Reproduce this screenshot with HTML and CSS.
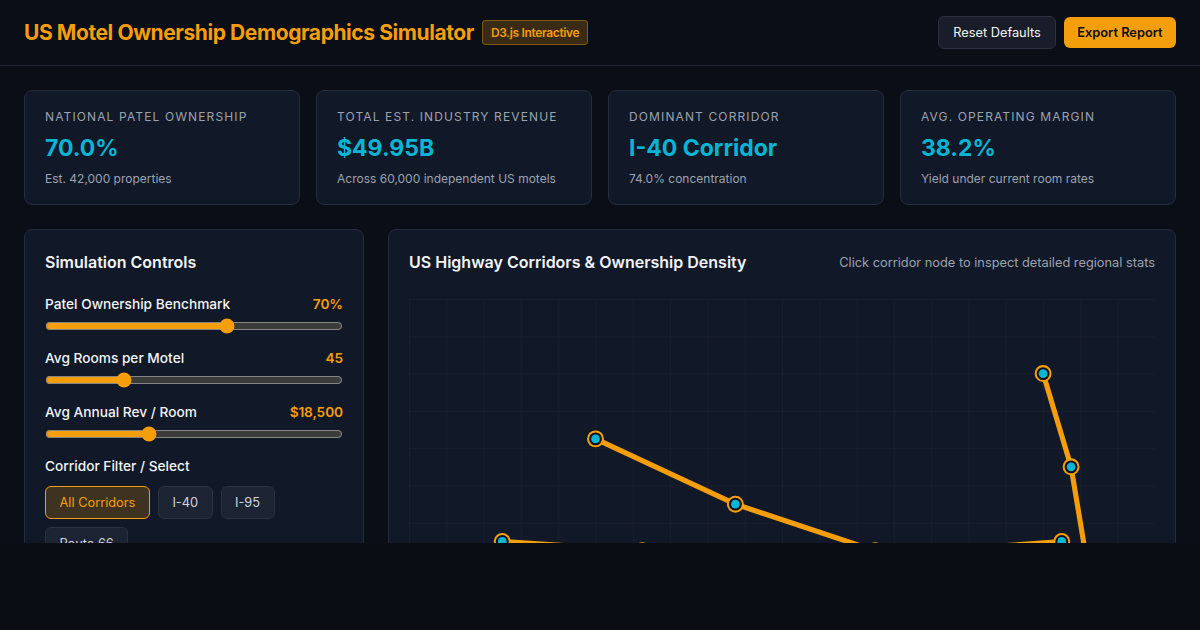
FILE: index.html
```html
<!DOCTYPE html>
<html lang="en">
<head>
  <meta charset="utf-8">
  <title>US Motel Ownership Demographics Simulator</title>
  <link rel="stylesheet" href="styles.css">
</head>
<body>
  <div class="app">
    <header class="topbar">
      <div class="brand">
        <h1>US Motel Ownership Demographics Simulator</h1>
        <span class="badge">D3.js Interactive</span>
      </div>
      <div class="actions">
        <button class="btn">Reset Defaults</button>
        <button class="btn btn-primary">Export Report</button>
      </div>
    </header>

    <section class="stats">
      <div class="card">
        <div class="card-label">National Patel Ownership</div>
        <div class="card-value">70.0%</div>
        <div class="card-sub">Est. 42,000 properties</div>
      </div>
      <div class="card">
        <div class="card-label">Total Est. Industry Revenue</div>
        <div class="card-value">$49.95B</div>
        <div class="card-sub">Across 60,000 independent US motels</div>
      </div>
      <div class="card">
        <div class="card-label">Dominant Corridor</div>
        <div class="card-value">I-40 Corridor</div>
        <div class="card-sub">74.0% concentration</div>
      </div>
      <div class="card">
        <div class="card-label">Avg. Operating Margin</div>
        <div class="card-value">38.2%</div>
        <div class="card-sub">Yield under current room rates</div>
      </div>
    </section>

    <main class="workspace">
      <aside class="panel controls">
        <h2>Simulation Controls</h2>
        <div class="field">
          <div class="field-row"><label for="patel">Patel Ownership Benchmark</label><span class="field-value">70%</span></div>
          <input id="patel" type="range" min="0" max="100" step="0.1" value="61.7">
        </div>
        <div class="field">
          <div class="field-row"><label for="rooms">Avg Rooms per Motel</label><span class="field-value">45</span></div>
          <input id="rooms" type="range" min="0" max="100" step="0.1" value="25.2">
        </div>
        <div class="field">
          <div class="field-row"><label for="rev">Avg Annual Rev / Room</label><span class="field-value">$18,500</span></div>
          <input id="rev" type="range" min="0" max="100" step="0.1" value="34">
        </div>
        <div class="filter-label">Corridor Filter / Select</div>
        <div class="filters">
          <button class="chip chip-active">All Corridors</button>
          <button class="chip">I-40</button>
          <button class="chip">I-95</button>
          <button class="chip">Route 66</button>
        </div>
      </aside>

      <section class="panel map">
        <div class="map-head">
          <h2>US Highway Corridors &amp; Ownership Density</h2>
          <span class="map-hint">Click corridor node to inspect detailed regional stats</span>
        </div>
        <svg class="map-svg" viewBox="0 0 800 500">
          <defs>
            <pattern id="grid" width="40" height="40" patternUnits="userSpaceOnUse">
              <path d="M40 0H0V40" fill="none" stroke="#1c2433" stroke-width="1"/>
            </pattern>
          </defs>
          <rect width="800" height="500" fill="url(#grid)"/>
          <g class="route">
            <polyline points="100,260 250,270 400,300"/>
            <polyline points="200,150 350,220 500,270"/>
            <polyline points="680,80 710,180 730,300"/>
            <polyline points="700,260 500,275"/>
          </g>
          <g class="node"><circle class="ring" cx="100" cy="260" r="8"/><circle class="dot" cx="100" cy="260" r="4.7"/></g>
          <g class="node"><circle class="ring" cx="250" cy="270" r="8"/><circle class="dot" cx="250" cy="270" r="4.7"/></g>
          <g class="node"><circle class="ring" cx="200" cy="150" r="8"/><circle class="dot" cx="200" cy="150" r="4.7"/></g>
          <g class="node"><circle class="ring" cx="350" cy="220" r="8"/><circle class="dot" cx="350" cy="220" r="4.7"/></g>
          <g class="node"><circle class="ring" cx="500" cy="270" r="8"/><circle class="dot" cx="500" cy="270" r="4.7"/></g>
          <g class="node"><circle class="ring" cx="680" cy="80" r="8"/><circle class="dot" cx="680" cy="80" r="4.7"/></g>
          <g class="node"><circle class="ring" cx="710" cy="180" r="8"/><circle class="dot" cx="710" cy="180" r="4.7"/></g>
          <g class="node"><circle class="ring" cx="700" cy="260" r="8"/><circle class="dot" cx="700" cy="260" r="4.7"/></g>
        </svg>
      </section>
    </main>
  </div>
</body>
</html>
```

FILE: styles.css
```css
html, body {
  margin: 0;
  height: 630px;
  overflow: hidden;
  background: #0a0d14;
  font-family: "Inter", "Liberation Sans", sans-serif;
  color: #f3f4f6;
}

.app {
  height: 543px;
  overflow: hidden;
  background: #0a0e17;
}

/* header */
.topbar {
  display: flex;
  justify-content: space-between;
  align-items: center;
  height: 65px;
  padding: 0 24px;
  border-bottom: 1px solid #1f2533;
}
.brand {
  display: flex;
  align-items: center;
  gap: 8px;
}
.brand h1 {
  margin: 0;
  font-size: 21px;
  font-weight: 700;
  letter-spacing: -0.42px;
  color: #f59e0b;
}
.badge {
  padding: 4px 8px;
  font-size: 12px;
  font-weight: 600;
  letter-spacing: -0.35px;
  color: #f59e0b;
  background: rgba(245, 158, 11, 0.2);
  border: 1px solid rgba(245, 158, 11, 0.4);
  border-radius: 4px;
}
.actions {
  display: flex;
  align-items: center;
  gap: 8px;
}
.btn {
  padding: 0 14px;
  height: 33px;
  font-family: inherit;
  font-size: 12.8px;
  font-weight: 400;
  color: #f3f4f6;
  background: #181d29;
  border: 1px solid #2a3140;
  border-radius: 6px;
}
.btn-primary {
  height: 31px;
  padding: 0 13.5px;
  font-weight: 600;
  color: #0a0e17;
  background: #f59e0b;
  border: 0;
}

/* stat cards */
.stats {
  display: grid;
  grid-template-columns: repeat(4, 1fr);
  gap: 16px;
  padding: 24px 24px 0;
}
.card {
  height: 115px;
  box-sizing: border-box;
  padding: 18px 20px;
  background: #111827;
  border: 1px solid #232c3b;
  border-radius: 8px;
}
.card-label {
  font-size: 12px;
  line-height: 15px;
  text-transform: uppercase;
  letter-spacing: 1.12px;
  color: #9ca3af;
}
.card-value {
  margin-top: 10px;
  font-size: 23px;
  line-height: 29px;
  font-weight: 700;
  color: #06b6d4;
}
.card-sub {
  margin-top: 8px;
  font-size: 12px;
  line-height: 15px;
  color: #9ca3af;
}

/* lower panels */
.workspace {
  display: grid;
  grid-template-columns: 340px 1fr;
  gap: 24px;
  padding: 24px 24px 0;
}
.panel {
  box-sizing: border-box;
  height: 600px;
  padding: 20px;
  background: #111827;
  border: 1px solid #232c3b;
  border-radius: 8px;
}
.panel h2 {
  margin: 0;
  font-size: 16px;
  line-height: 24px;
  font-weight: 600;
  color: #f3f4f6;
}

.controls h2 {
  margin-bottom: 21px;
}
.field {
  margin-bottom: 15px;
}
.field-row {
  display: flex;
  justify-content: space-between;
  align-items: center;
  height: 17px;
  margin-bottom: 6px;
  font-size: 13.7px;
  font-weight: 500;
}
.field-value {
  font-weight: 600;
  letter-spacing: -0.1px;
  color: #f59e0b;
}
.field input {
  display: block;
  width: 100%;
  margin: 0;
  height: 16px;
  accent-color: #f59e0b;
}
.filter-label {
  margin-top: 16px;
  margin-bottom: 11px;
  font-size: 13.7px;
  line-height: 17px;
  font-weight: 500;
}
.filters {
  display: flex;
  flex-wrap: wrap;
  gap: 8px;
}
.chip {
  height: 33px;
  padding: 0 13.5px;
  font-family: inherit;
  font-size: 12.8px;
  color: #d1d5db;
  background: #1c2433;
  border: 1px solid #2a3140;
  border-radius: 6px;
}
.chip-active {
  color: #f59e0b;
  background: rgba(245, 158, 11, 0.2);
  border-color: #f59e0b;
}

.map-head {
  display: flex;
  justify-content: space-between;
  align-items: center;
  margin-bottom: 25px;
}
.map-hint {
  font-size: 12.8px;
  color: #9ca3af;
}
.map-svg {
  display: block;
  width: 100%;
}
.route polyline {
  fill: none;
  stroke: #f59e0b;
  stroke-width: 5.5;
}
.ring {
  fill: #0a0e17;
  stroke: #f59e0b;
  stroke-width: 2.2;
}
.dot {
  fill: #06b6d4;
}
```
